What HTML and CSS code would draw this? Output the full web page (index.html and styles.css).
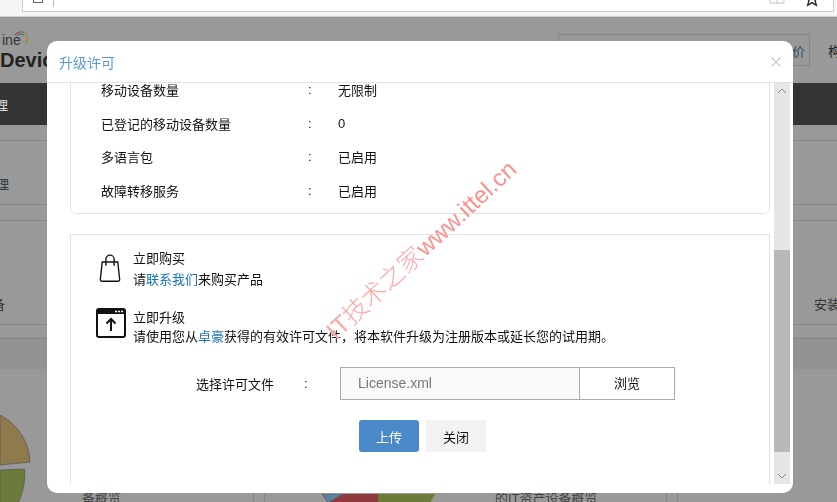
FILE: index.html
```html
<!DOCTYPE html>
<html lang="en">
<head>
    <meta charset="UTF-8">
    <meta name="viewport" content="width=device-width, initial-scale=1.0">
    <title>升级许可</title>
    <link rel="stylesheet" href="styles.css">
</head>
<body>
    <!-- Browser toolbar -->
    <div class="toolbar">
        <div class="address">
            <span class="address-home"><span class="home-square"></span></span>
            <span class="address-actions">
                <svg width="16" height="12" viewBox="0 0 16 12"><path d="M1 -6h6l1 1 1-1h6v9H9L8 4 7 3H1zM8 -5v9" fill="none" stroke="#c4c4c4"/></svg>
                <svg width="14" height="12" viewBox="0 0 14 12"><path d="M7 -8l2 5 5 .4-4 3 1.400 5L7 2.600 2.600 5.400 4 .4 0-2.600 5-3z" fill="none" stroke="#222" stroke-width="1.300"/></svg>
            </span>
        </div>
    </div>

    <!-- Page behind the dialog -->
    <div class="page">
        <div class="page-head">
            <div class="brand">
                <div class="brand-top">
                    <span class="brand-word">ine</span>
                    <svg class="brand-swirl" width="15" height="16" viewBox="0 0 15 16" fill="none" stroke-width="1.100">
                        <path d="M1 5A6.500 6.500 0 0 1 6 2" stroke="#a33"/>
                        <path d="M6 2A6.500 6.500 0 0 1 10 2.500" stroke="#5a7d3a"/>
                        <path d="M3 6A5 5 0 0 1 10 5" stroke="#2f6f8f"/>
                        <path d="M10 2.500A7 7 0 0 1 11 14" stroke="#a8892a"/>
                    </svg>
                </div>
                <div class="brand-name">Devic</div>
            </div>
            <div class="search">价</div>
            <div class="head-link">构</div>
        </div>
        <div class="page-nav"><span>理</span></div>
        <div class="page-row row-one"><span>理</span></div>
        <div class="page-row row-two">
            <span>备</span>
            <span>安装</span>
        </div>
        <div class="page-band"></div>
        <div class="charts">
            <div class="chart chart-left">
                <svg class="pie-left" width="32" height="88" viewBox="0 0 32 88">
                    <path d="M0 0A55 55 0 0 1 30 47L0 50z" fill="#8f7a4c" stroke="#555" stroke-width=".7"/>
                    <path d="M0 55L24.500 54Q26 72 18 88H0z" fill="#6b7c3a" stroke="#555" stroke-width=".7"/>
                </svg>
                <span class="chart-title">备概览</span>
            </div>
            <div class="chart chart-mid">
                <svg class="pie-mid" width="113" height="9" viewBox="0 0 113 9">
                    <path d="M0 0H21L6 9z" fill="#5b7f9e" stroke="#555" stroke-width=".7"/>
                    <path d="M21 0H56V9H6z" fill="#8e3a3c"/>
                    <path d="M56 0H113L108 9H56z" fill="#6b7c3a"/>
                </svg>
                <span class="chart-title">的IT资产设备概览</span>
            </div>
            <div class="chart chart-right"></div>
        </div>
    </div>

    <!-- Upgrade dialog -->
    <div class="modal">
        <div class="modal-header">
            <span class="modal-title">升级许可</span>
            <svg class="modal-close" width="10" height="10" viewBox="0 0 10 10"><path d="M.5 .5l9 9M9.500 .5l-9 9" stroke="#c8c8c8" stroke-width="1.100"/></svg>
        </div>
        <div class="modal-body">
            <div class="modal-scroll">
                <div class="card info-card">
                    <div class="info-row"><span class="info-label">移动设备数量</span><span class="info-colon">:</span><span>无限制</span></div>
                    <div class="info-row"><span class="info-label">已登记的移动设备数量</span><span class="info-colon">:</span><span>0</span></div>
                    <div class="info-row"><span class="info-label">多语言包</span><span class="info-colon">:</span><span>已启用</span></div>
                    <div class="info-row"><span class="info-label">故障转移服务</span><span class="info-colon">:</span><span>已启用</span></div>
                </div>
                <div class="card upgrade-card">
                    <div class="action action-buy">
                        <svg class="action-icon" width="22" height="30" viewBox="0 0 24 32">
                            <path d="M3.500 9.500H20.500L22.500 28Q22.700 30.500 20.500 30.500H3.500Q1.300 30.500 1.500 28z" fill="none" stroke="#111" stroke-width="1.500"/>
                            <path d="M7.500 12V6.500a4.500 4.500 0 0 1 9 0V12" fill="none" stroke="#111" stroke-width="1.500"/>
                            <circle cx="7.500" cy="12.500" r="1" fill="#111"/>
                            <circle cx="16.500" cy="12.500" r="1" fill="#111"/>
                        </svg>
                        <div class="action-text">
                            <div>立即购买</div>
                            <div>请<a href="#">联系我们</a>来购买产品</div>
                        </div>
                    </div>
                    <div class="action action-upgrade">
                        <svg class="action-icon" width="30" height="30" viewBox="0 0 30 30">
                            <rect x="1" y="1" width="28" height="28" rx="2" fill="none" stroke="#111" stroke-width="2"/>
                            <path d="M1 1H29V6H1z" fill="#111"/>
                            <path d="M19 3.500h2M22 3.500h2M25 3.500h2" stroke="#fff" stroke-width="1.600"/>
                            <path d="M15 23V11M10.500 15.500L15 11l4.500 4.500" fill="none" stroke="#111" stroke-width="2"/>
                        </svg>
                        <div class="action-text">
                            <div>立即升级</div>
                            <div>请使用您从<a href="#">卓豪</a>获得的有效许可文件，将本软件升级为注册版本或延长您的试用期。</div>
                        </div>
                    </div>
                    <div class="file-row">
                        <label class="file-label">选择许可文件</label>
                        <span class="file-colon">:</span>
                        <div class="file-picker">
                            <span class="file-name">License.xml</span>
                            <span class="file-browse">浏览</span>
                        </div>
                    </div>
                    <div class="buttons">
                        <button class="btn btn-primary">上传</button>
                        <button class="btn btn-plain">关闭</button>
                    </div>
                </div>
            </div>
            <div class="scrollbar">
                <div class="scroll-arrow">
                    <svg width="10" height="6" viewBox="0 0 10 6"><path d="M1 5l4-4 4 4" fill="none" stroke="#8a8a8a"/></svg>
                </div>
                <div class="scroll-space-top"></div>
                <div class="scroll-thumb"></div>
                <div class="scroll-arrow scroll-arrow-down">
                    <svg width="10" height="6" viewBox="0 0 10 6"><path d="M1 1l4 4 4-4" fill="none" stroke="#8a8a8a"/></svg>
                </div>
            </div>
        </div>
        <div class="watermark"><span class="watermark-cjk">IT技术之家</span>www.ittel.cn</div>
    </div>
</body>
</html>
```

FILE: styles.css
```css
* {
    margin: 0;
    padding: 0;
    box-sizing: border-box;
}

html, body {
    height: 502px;
    overflow: hidden;
}

body {
    background-color: #999;
    color: #111;
    font-family: "Liberation Sans", Arial, "Noto Sans CJK SC", sans-serif;
    font-size: 13px;
}

/* Browser toolbar */
.toolbar {
    height: 17px;
    background-color: #f4f4f4;
    border-bottom: 1px solid #cfcfcf;
    padding-left: 22px;
    padding-right: 3px;
}

.address {
    display: flex;
    justify-content: space-between;
    height: 12px;
    background-color: #fff;
    border: 1px solid #ccc;
    border-top: none;
}

.address-home {
    width: 31px;
    height: 7px;
    padding-left: 10px;
    border-right: 1px solid #bbb;
}

.home-square {
    display: block;
    width: 10px;
    height: 3px;
    border: 1px solid #666;
    border-top: none;
}

.address-actions {
    display: flex;
    gap: 20px;
    margin-right: 14px;
}

/* Page behind the dialog */
.page {
    color: #222;
}

.page-head {
    display: flex;
    height: 66px;
}

.brand {
    flex: 1;
    padding-top: 13px;
    overflow: hidden;
}

.brand-top {
    display: flex;
    align-items: flex-end;
    height: 16px;
    padding-left: 2px;
    font-size: 14px;
    line-height: 14px;
    color: #333;
}

.brand-word {
    margin-bottom: -1px;
}

.brand-swirl {
    margin-left: -7px;
}

.brand-name {
    font-size: 20px;
    font-weight: bold;
    line-height: 24px;
    color: #222;
    margin-top: 2px;
}

.search {
    width: 252px;
    height: 32px;
    margin-top: 17px;
    border: 1px solid #858585;
    text-align: right;
    padding-right: 4px;
    line-height: 33px;
    color: #2c4a6b;
}

.head-link {
    width: 27px;
    padding: 27px 0 0 18px;
    white-space: nowrap;
    overflow: hidden;
    line-height: 16px;
}

.page-nav {
    height: 42px;
    padding-top: 2px;
    background-color: #333;
    color: #ddd;
    line-height: 42px;
    text-indent: -5px;
}

.page-row {
    border-top: 1px solid #858585;
    border-bottom: 1px solid #858585;
    display: flex;
    justify-content: space-between;
}

.row-one {
    height: 65px;
    margin-top: 15px;
    padding-top: 33px;
    text-indent: -4px;
    color: #2c3a46;
}

.row-two {
    height: 105px;
    margin-top: 15px;
    padding-top: 73px;
    margin-left: -8px;
    margin-right: -3px;
    color: #333;
}

.page-band {
    height: 31px;
    margin-top: 13px;
    background-color: #939393;
    border-top: 1px solid #858585;
}

.charts {
    display: flex;
    height: 134px;
}

.chart {
    display: flex;
    flex-direction: column;
}

.chart-left {
    width: 254px;
    border-right: 1px solid #858585;
    overflow: hidden;
}

.chart-mid {
    width: 403px;
    margin-left: 10px;
    border-left: 1px solid #858585;
    border-right: 1px solid #858585;
}

.chart-right {
    flex: 1;
    margin-left: 10px;
    border-left: 1px solid #858585;
}

.pie-left {
    flex: none;
    margin-top: 46px;
    margin-bottom: -12px;
}

.chart-title {
    color: #444;
    line-height: 15px;
}

.chart-left .chart-title {
    padding-left: 82px;
}

.chart-mid .chart-title {
    padding-left: 230px;
}

.pie-mid {
    flex: none;
    margin: 125px 0 -12px 57px;
}

/* Dialog */
.modal {
    position: fixed;
    left: 47px;
    top: 41px;
    width: 746px;
    height: 452px;
    background-color: #fff;
    border-radius: 10px;
    overflow: hidden;
}

.modal-header {
    display: flex;
    align-items: center;
    justify-content: space-between;
    height: 42px;
    padding: 0 12px;
    border-bottom: 1px solid #e5dfe1;
}

.modal-title {
    color: #5b9bd5;
    font-size: 14px;
}

.modal-body {
    display: flex;
    height: 401px;
}

.modal-scroll {
    flex: 1;
    padding: 0 4px 0 23px;
    overflow: hidden;
}

.card {
    border: 1px solid #e2e2e2;
}

.info-card {
    height: 145px;
    margin-top: -14px;
    padding: 3px 0 0 30px;
    border-radius: 0 0 6px 6px;
}

.info-row {
    display: flex;
    align-items: center;
    height: 33.5px;
}

.info-label {
    width: 207px;
}

.info-colon {
    width: 30px;
}

.upgrade-card {
    height: 300px;
    margin-top: 20px;
    padding-top: 13px;
}

.action {
    display: flex;
    line-height: 21px;
}

.action a {
    color: #1b75bb;
    text-decoration: none;
}

.action-buy {
    padding-left: 28px;
    gap: 12px;
}

.action-buy .action-icon {
    margin-top: 5px;
}

.action-upgrade {
    margin-top: 18px;
    padding-left: 25px;
    gap: 7px;
    line-height: 19px;
}

.file-row {
    display: flex;
    align-items: center;
    margin-top: 21px;
    padding-left: 125px;
}

.file-label {
    width: 108px;
}

.file-colon {
    width: 36px;
}

.file-picker {
    display: flex;
    width: 335px;
    height: 33px;
    border: 1px solid #aaa;
    line-height: 31px;
}

.file-name {
    flex: 1;
    padding-left: 17px;
    background-color: #f9f9f9;
    color: #777;
    font-size: 14px;
    border-right: 1px solid #aaa;
}

.file-browse {
    width: 94px;
    text-align: center;
}

.buttons {
    display: flex;
    gap: 7px;
    margin-top: 20px;
    padding-left: 288px;
}

.btn {
    width: 60px;
    height: 32px;
    border: none;
    border-radius: 3px;
    font-family: inherit;
    font-size: 13px;
}

.btn-primary {
    background-color: #4a8ac9;
    color: #fff;
}

.btn-plain {
    background-color: #f2f2f2;
    color: #111;
}

/* Fake scrollbar */
.scrollbar {
    display: flex;
    flex-direction: column;
    width: 16px;
    margin-right: 3px;
    background-color: #e6e6e6;
}

.scroll-arrow {
    display: flex;
    align-items: center;
    justify-content: center;
    height: 16px;
}

.scroll-space-top {
    height: 151px;
}

.scroll-thumb {
    flex: 1;
    background-color: #b9b9b9;
}

.scroll-arrow-down {
    height: 32px;
    padding-top: 16px;
}

.watermark {
    position: absolute;
    left: 248px;
    top: 189px;
    width: max-content;
    transform: rotate(-43deg);
    color: #ff8f8f;
    font-size: 24px;
    white-space: nowrap;
    pointer-events: none;
}

.watermark-cjk {
    font-size: 25px;
    font-weight: 300;
    color: #ffa8a8;
}
```
